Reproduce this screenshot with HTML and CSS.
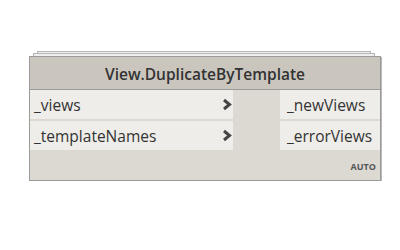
FILE: index.html
```html
<!DOCTYPE html>
<html lang="en">
<head>
   <meta charset="UTF-8">
   <title>View.DuplicateByTemplate</title>
   <link rel="stylesheet" href="styles.css">
</head>
<body>
   <div class="node">
       <div class="node-header">View.DuplicateByTemplate</div>
       <div class="node-body">
           <div class="ports inputs">
               <div class="port">
                   <span>_views</span>
                   <svg class="chevron" width="10" height="13" viewBox="0 0 10 13"><polyline points="2,2 7.5,6.5 2,11" fill="none" stroke="#444" stroke-width="3"/></svg>
               </div>
               <div class="port">
                   <span>_templateNames</span>
                   <svg class="chevron" width="10" height="13" viewBox="0 0 10 13"><polyline points="2,2 7.5,6.5 2,11" fill="none" stroke="#444" stroke-width="3"/></svg>
               </div>
           </div>
           <div class="ports outputs">
               <div class="port">_newViews</div>
               <div class="port">_errorViews</div>
           </div>
       </div>
       <div class="node-footer">AUTO</div>
   </div>
</body>
</html>
```
FILE: styles.css
```css
body {
    margin: 0;
    padding: 56px 0 0 29px;
    background-color: #ffffff;
    font-family: 'Open Sans', 'DejaVu Sans', sans-serif;
    color: #333;
}
.node {
    width: 350px;
    border: 1px solid #9a9a9a;
    box-shadow: 1px 1px 0 #b8b8b8;
    background-color: #dcd9d2;
    position: relative;
}
/* stacked copies behind the node */
.node::before,
.node::after {
    content: "";
    position: absolute;
    border: 1px solid #b5b5b5;
    border-bottom: none;
    background-color: #f0efed;
    z-index: -1;
}
.node::before {
    top: -6px;
    left: 7px;
    right: 9px;
    height: 10px;
}
.node::after {
    top: -4px;
    left: 3px;
    right: 5px;
    height: 10px;
}
.node-header {
    height: 32px;
    line-height: 34px;
    background-color: #cac6be;
    border-bottom: 1px solid #9a9a9a;
    text-align: center;
    font-size: 15.5px;
    font-weight: 600;
    color: #333;
}
.node-body {
    display: flex;
    justify-content: space-between;
}
.ports {
    display: flex;
    flex-direction: column;
    gap: 2px;
}
.inputs {
    width: 203px;
}
.outputs {
    width: 100px;
}
.port {
    height: 29px;
    background-color: #eeede9;
    font-size: 15.5px;
    display: flex;
    align-items: center;
}
.inputs .port {
    justify-content: space-between;
    padding: 0 1px 0 4px;
}
.outputs .port {
    padding-left: 7px;
}
.chevron {
    display: block;
}
.node-footer {
    height: 30px;
    display: flex;
    align-items: center;
    justify-content: flex-end;
    padding: 3px 4px 0 0;
    box-sizing: border-box;
    font-size: 9px;
    font-weight: 700;
    color: #555;
}
```
